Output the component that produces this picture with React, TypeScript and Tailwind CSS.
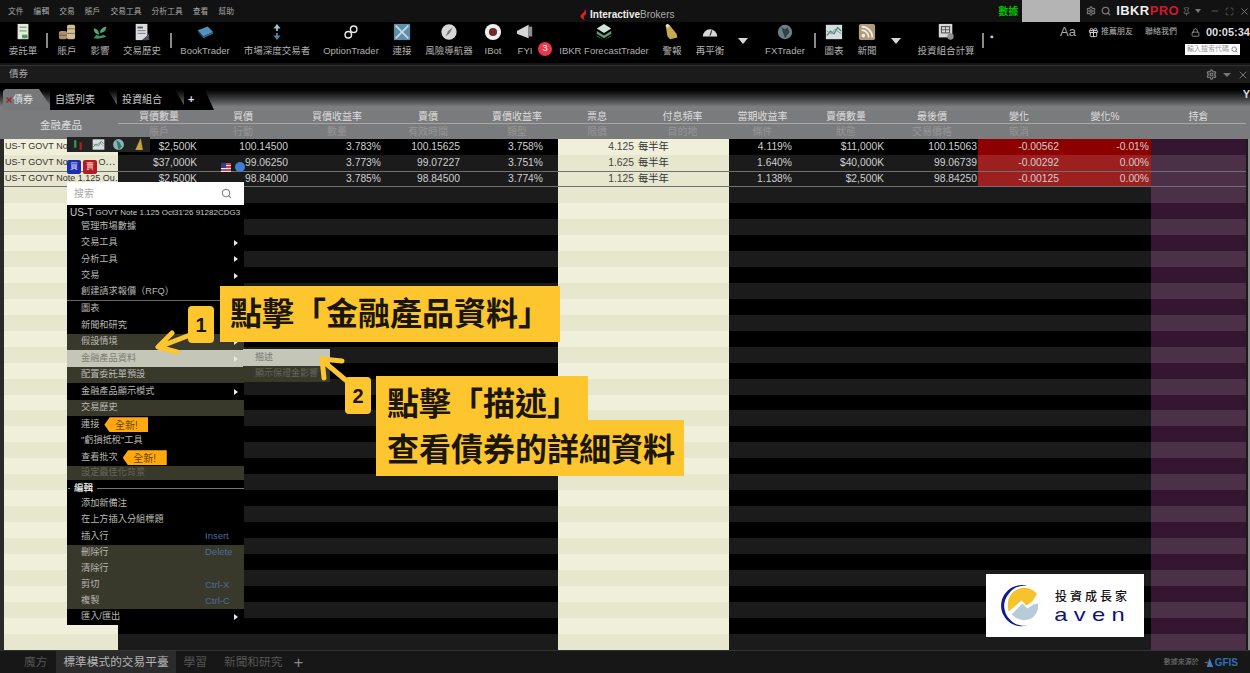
import { Gift, Lock, Maximize, Minus, Pin, Search, Settings, X } from "lucide-react";
import type { ReactNode } from "react";

const gridCols =
  "grid grid-cols-[114px_82px_92px_93px_79px_94px_78px_93px_67px_92px_90px_88px_85px_95px]";

const headerWidths = ["w-[82px]", "w-[92px]", "w-[93px]", "w-[79px]", "w-[94px]", "w-[78px]", "w-[93px]", "w-[67px]", "w-[92px]", "w-[90px]", "w-[88px]", "w-[85px]", "w-[95px]"];

const menus = ["文件", "編輯", "交易", "賬戶", "交易工具", "分析工具", "查看", "幫助"];

const icons: Record<string, ReactNode> = {
  order: (
    <>
      <rect x="4" y="1" width="12" height="17" fill="#e4e9dc" />
      <rect x="6" y="4" width="8" height="1.5" fill="#8aa88a" />
      <rect x="6" y="8" width="8" height="1.5" fill="#8aa88a" />
      <rect x="9" y="13" width="6" height="4" fill="#4f9a5a" />
    </>
  ),
  coins: (
    <>
      <rect x="1" y="9" width="9" height="9" rx="2" fill="#a8906a" />
      <rect x="10" y="2" width="9" height="16" rx="2" fill="#d3bd94" />
      <rect x="10" y="6" width="9" height="1" fill="#7d6a4a" />
      <rect x="10" y="11" width="9" height="1" fill="#7d6a4a" />
      <rect x="1" y="13" width="9" height="1" fill="#6d5a3c" />
    </>
  ),
  sprout: (
    <>
      <path d="M3 17c5 1 10 0 14-2l-3-2c-3 2-6 1-8 0z" fill="#3f8f5a" />
      <path d="M9 13C9 8 6 6 3 6c0 4 2 6 6 7zM10 11c0-4 3-6 7-7 0 4-2 7-7 7z" fill="#4fa56a" />
    </>
  ),
  history: (
    <>
      <rect x="3" y="1" width="13" height="18" fill="#d9dde0" />
      <rect x="5" y="4" width="6" height="2" fill="#555" />
      <rect x="5" y="8" width="9" height="1" fill="#777" />
      <rect x="5" y="11" width="9" height="1" fill="#777" />
      <path d="M10 19l8-7v7z" fill="#4b5258" />
    </>
  ),
  book: (
    <>
      <path d="M2 8l11-4 6 6-11 5z" fill="#4f93bd" />
      <path d="M2 8l6 7v2L2 10z" fill="#20475f" />
      <path d="M8 15l11-5v2L8 17z" fill="#2e6a8e" />
    </>
  ),
  depth: (
    <>
      <path d="M10 1l4 5h-3v3H9V6H6z" fill="#9fc0d8" />
      <path d="M10 19l-4-5h3v-3h2v3h3z" fill="#4f82a8" />
    </>
  ),
  chain: (
    <>
      <circle cx="7" cy="13" r="3.6" fill="none" stroke="#e8e8e8" strokeWidth="1.6" />
      <circle cx="13" cy="7" r="3.6" fill="none" stroke="#e8e8e8" strokeWidth="1.6" />
    </>
  ),
  link: (
    <>
      <rect x="1" y="1" width="18" height="18" fill="#5f8fa8" />
      <path d="M3 3l14 14M17 3L3 17" stroke="#c5d8e2" strokeWidth="2" />
    </>
  ),
  compass: (
    <>
      <circle cx="10" cy="10" r="8.5" fill="#d8d8d8" />
      <path d="M14 5L11 11 6 15l3-6z" fill="#777" />
    </>
  ),
  ibot: (
    <>
      <circle cx="10" cy="10" r="9" fill="#eee" />
      <circle cx="10" cy="10" r="4.5" fill="#6a2a2a" />
    </>
  ),
  fyi: (
    <>
      <path d="M1 9l13-7v15L1 12z" fill="#d6d6d6" />
      <rect x="14" y="4" width="4" height="11" fill="#8e8e8e" />
    </>
  ),
  layers: (
    <>
      <path d="M10 1l8 5-8 5-8-5z" fill="#cfe3d6" />
      <path d="M2 9l8 5 8-5v3l-8 5-8-5z" fill="#5f9f7a" />
      <path d="M2 14l8 5 8-5v1l-8 4-8-4z" fill="#3f7f5a" />
    </>
  ),
  bell: (
    <>
      <path d="M3 3l4-1 8 10 1 4-8 2-3-3z" fill="#c8a850" />
      <circle cx="5" cy="3" r="2" fill="#e8e0c0" />
    </>
  ),
  gauge: (
    <>
      <path d="M2 15a8 8 0 0 1 16 0z" fill="#d8d8d8" />
      <path d="M10 14l2-6" stroke="#444" strokeWidth="1.4" />
    </>
  ),
  globe: (
    <>
      <circle cx="10" cy="10" r="8" fill="#6d7f86" />
      <path d="M6 5l4 2 3-2 2 5-5 7-2-6z" fill="#2f4048" />
    </>
  ),
  chart: (
    <>
      <rect x="1" y="2" width="18" height="16" fill="#d6dde0" />
      <path d="M2 14l4-5 4 3 4-7 4 4" fill="none" stroke="#4f8f6a" strokeWidth="1.5" />
      <path d="M2 9l5 3 4-5 7 5" fill="none" stroke="#7f8f9a" strokeWidth="1" />
    </>
  ),
  rss: (
    <>
      <rect x="1" y="1" width="18" height="18" rx="2" fill="#b09a78" />
      <circle cx="6" cy="14" r="2" fill="#eee" />
      <path d="M4 8a8 8 0 0 1 8 8M4 4a12 12 0 0 1 12 12" fill="none" stroke="#eee" strokeWidth="2" />
    </>
  ),
  calc: (
    <>
      <rect x="2" y="1" width="15" height="15" fill="#d6d6d6" />
      <rect x="5" y="4" width="9" height="7" fill="none" stroke="#555" strokeWidth="1.2" />
      <path d="M9.5 4v7M5 7.5h9" stroke="#555" />
      <circle cx="15" cy="15" r="3.5" fill="#8f8f8f" />
    </>
  ),
};

function ToolIcon({ name }: { name: string }) {
  return (
    <svg viewBox="0 0 20 20" className="h-[18px] w-[18px]">
      {icons[name]}
    </svg>
  );
}

function ToolItem({ icon, label, width }: { icon: string; label: string; width: string }) {
  return (
    <div className={`flex shrink-0 flex-col items-center ${width}`}>
      <div className="flex h-[20px] items-center">
        <ToolIcon name={icon} />
      </div>
      <span className="mt-[2px] whitespace-nowrap text-[9.5px] leading-[14px] text-[#b0b0b0]">{label}</span>
    </div>
  );
}

function ToolSep() {
  return <div className="mt-[11px] h-[15px] w-[2px] shrink-0 bg-[#8a8a8a]" />;
}

function ToolCaret({ width }: { width: string }) {
  return (
    <div className={`flex shrink-0 justify-center pt-[16px] ${width}`}>
      <div className="h-0 w-0 border-x-[5px] border-t-[6px] border-x-transparent border-t-[#d8d8d8]" />
    </div>
  );
}

const headers = [
  { top: "買價數量", sub: "賬戶", cls: "" },
  { top: "買價", sub: "行動", cls: "pr-[6px]" },
  { top: "買價收益率", sub: "數量", cls: "pr-[3px]" },
  { top: "賣價", sub: "有效時間", cls: "pl-[7px]" },
  { top: "賣價收益率", sub: "類型", cls: "pl-[12px]" },
  { top: "票息", sub: "限價", cls: "" },
  { top: "付息頻率", sub: "目的地", cls: "" },
  { top: "當期收益率", sub: "條件", cls: "" },
  { top: "賣價數量", sub: "狀態", cls: "pl-[8px]" },
  { top: "最後價", sub: "交易價格", cls: "pr-[2px]" },
  { top: "變化", sub: "取消", cls: "pr-[6px]" },
  { top: "變化%", sub: "", cls: "pr-[7px]" },
  { top: "持倉", sub: "", cls: "" },
];

const bonds = [
  {
    name: "US-T GOVT No",
    tail: "",
    v: ["$2,500K", "100.14500", "3.783%", "100.15625", "3.758%", "4.125", "每半年", "4.119%", "$11,000K", "100.15063", "-0.00562", "-0.01%"],
  },
  {
    name: "US-T GOVT No",
    tail: "O⋯",
    v: ["$37,000K", "99.06250", "3.773%", "99.07227", "3.751%", "1.625", "每半年", "1.640%", "$40,000K", "99.06739", "-0.00292", "0.00%"],
  },
  {
    name: "US-T GOVT Note 1.125 Ou…",
    tail: "",
    v: ["$2,500K", "98.84000", "3.785%", "98.84500", "3.774%", "1.125", "每半年", "1.138%", "$2,500K", "98.84250", "-0.00125", "0.00%"],
  },
];

function TableRow({ index }: { index: number }) {
  const bond = bonds[index];
  const dark = index % 2 === 0 && index !== 2;
  const v = bond ? bond.v : [];
  const cell = `flex items-center justify-end ${dark ? "bg-black" : "bg-[#1b1b1b]"}`;
  const cream = dark ? "bg-[#f0efd9]" : "bg-[#e7e6ce]";
  const red = index === 0 ? "bg-[#8c0000]" : index < 3 ? "bg-[#9c2020]" : dark ? "bg-black" : "bg-[#1b1b1b]";
  return (
    <div
      className={`${gridCols} h-4 text-[10.3px] leading-none text-[#cfcfcf] ${
        index === 2 ? "border-y border-[#707070]" : ""
      }`}
    >
      <div className={`flex items-center justify-between overflow-hidden whitespace-nowrap pl-[1px] pr-[3px] text-[9px] text-[#333] ${cream}`}>
        <span>{bond?.name}</span>
        {bond?.tail && <span>{bond.tail}</span>}
      </div>
      <div className={`${cell} pr-[3px]`}>{v[0]}</div>
      <div className={`${cell} pr-[4px]`}>{v[1]}</div>
      <div className={`${cell} pr-[4px]`}>{v[2]}</div>
      <div className={`${cell} pr-[4px]`}>{v[3]}</div>
      <div className={`${cell} pr-[15px]`}>{v[4]}</div>
      <div className={`flex items-center justify-end pr-[2px] text-[#444] ${cream}`}>{v[5]}</div>
      <div className={`flex items-center pl-[2px] text-[#333] ${cream}`}>{v[6]}</div>
      <div className={`${cell} pr-[4px]`}>{v[7]}</div>
      <div className={`${cell} pr-[4px]`}>{v[8]}</div>
      <div className={`${cell} pr-[1px]`}>{v[9]}</div>
      <div className={`flex items-center justify-end pr-[7px] ${red}`}>{v[10]}</div>
      <div className={`flex items-center justify-end pr-[2px] ${red}`}>{v[11]}</div>
      <div className={dark ? "bg-[#351630]" : "bg-[#4c3048]"} />
    </div>
  );
}

type MenuEntry = { label: string; h?: string; olive?: boolean; arrow?: boolean; key?: string; dim?: boolean; hot?: boolean; badge?: string };

const menuTop: MenuEntry[] = [
  { label: "管理市場數據" },
  { label: "交易工具", arrow: true },
  { label: "分析工具", arrow: true },
  { label: "交易", arrow: true },
  { label: "創建請求報價（RFQ）" },
];

const menuMid: MenuEntry[] = [
  { label: "圖表", h: "h-[16.5px]" },
  { label: "新聞和研究", h: "h-[16.5px]" },
  { label: "假設情境", h: "h-[16.5px]", olive: true, arrow: true },
  { label: "金融產品資料", h: "h-[16.5px]", hot: true, arrow: true },
  { label: "配置委託單預設", h: "h-[16.5px]", olive: true },
  { label: "金融產品顯示模式", h: "h-[16.5px]", arrow: true },
  { label: "交易歷史", h: "h-[16.5px]", olive: true },
  { label: "連接", h: "h-[16.5px]", badge: "ml-[5px]" },
  { label: "\"虧損抵稅\"工具", h: "h-[16.5px]" },
  { label: "查看批次", h: "h-[16.5px]", badge: "ml-[5px]" },
  { label: "設定最佳化背景", h: "h-[14px]", olive: true, dim: true },
];

const menuEdit: MenuEntry[] = [
  { label: "添加新備注" },
  { label: "在上方插入分組標題" },
  { label: "插入行", key: "Insert" },
  { label: "刪除行", key: "Delete", olive: true },
  { label: "清除行", olive: true },
  { label: "剪切", key: "Ctrl-X", olive: true },
  { label: "複製", key: "Ctrl-C", olive: true },
  { label: "匯入/匯出", arrow: true },
];

function MenuItem({ item }: { item: MenuEntry }) {
  const bg = item.hot ? "bg-[#c4c6b8]" : item.olive ? "bg-[#38382b]" : "bg-black";
  const color = item.hot ? "text-[#7d7d74]" : item.dim ? "text-[#666659]" : "text-[#b8b8b4]";
  return (
    <div className={`flex items-center pl-[14px] pr-[4px] text-[9.2px] ${item.h ?? "h-[16.2px]"} ${bg} ${color}`}>
      <span className="whitespace-nowrap">{item.label}</span>
      {item.badge && (
        <span
          className={`flex h-[15px] w-[44px] items-center justify-center pt-[2px] text-[10px] text-[#6b4300] bg-[#ffa90f] [clip-path:polygon(0_50%,12%_0,100%_0,100%_100%,12%_100%)] ${item.badge}`}
        >
          全新!
        </span>
      )}
      {item.key && <span className="ml-auto mr-[7px] w-[28px] whitespace-nowrap text-[9.5px] text-[#4f6a9f]">{item.key}</span>}
      {item.arrow && (
        <span className="ml-auto mr-[2px] h-0 w-0 border-y-[3px] border-l-[4px] border-y-transparent border-l-[#e8e8e8]" />
      )}
    </div>
  );
}

function ContextMenu() {
  return (
    <div className="absolute left-[67px] top-[182px] w-[177px] bg-black">
      <div className="flex h-[23px] items-center justify-between bg-white pl-[7px] pr-[12px] text-[10px] text-[#aaa]">
        <span>搜索</span>
        <Search size={11} strokeWidth={2.5} className="text-[#888]" />
      </div>
      <div className="flex h-[14px] items-center whitespace-nowrap pl-[3px] pt-[1px] text-[8px] text-[#c8c8c8]">
        <span className="text-[10px]">US-T</span>&nbsp;GOVT Note 1.125 Oct31'26 91282CDG3
      </div>
      {menuTop.map((m) => (
        <MenuItem key={m.label} item={m} />
      ))}
      <div className="h-px bg-[#666]" />
      {menuMid.map((m) => (
        <MenuItem key={m.label} item={m} />
      ))}
      <div className="flex h-[16px] items-center bg-black pt-[1px]">
        <span className="w-[2px] h-px bg-[#888] ml-[1px]" />
        <span className="px-[4px] text-[9.5px] font-bold text-[#ddd]">編輯</span>
        <span className="h-px flex-1 bg-[#777]" />
      </div>
      {menuEdit.map((m) => (
        <MenuItem key={m.label} item={m} />
      ))}
    </div>
  );
}

function Logo() {
  return (
    <div className="absolute left-[986px] top-[574px] flex h-[63px] w-[158px] items-center bg-white pl-[12px]">
      <svg viewBox="0 0 48 48" className="h-[47px] w-[47px] shrink-0">
        <path d="M30 4A21 21 0 1 0 38 40 18 18 0 0 1 12 38 19 19 0 0 1 11 12 20 20 0 0 1 30 4z" fill="#0c1c8c" />
        <path d="M40 12A17 17 0 0 0 10 24c0 3 1 6 1 6l13-11 5 5 6-4z" fill="#f6c22d" />
        <path d="M14 33l11-11 5 5 6-4 5-1c1 8-4 17-14 17-5 0-9-2-13-6z" fill="#b9cbd8" />
      </svg>
      <div className="ml-[10px] flex flex-col items-center pt-[3px]">
        <span className="text-[12px] font-medium leading-[15px] tracking-[3px] text-[#111]">投資成長家</span>
        <span className="mt-[1px] origin-center scale-x-125 text-[19px] font-medium leading-[18px] tracking-[5px] text-[#12127a]">
          aven
        </span>
      </div>
    </div>
  );
}

function Callouts() {
  const box = "absolute bg-[#fdc62f] font-bold text-[#1c1608] whitespace-nowrap text-[32px] leading-none flex items-center";
  const badge =
    "absolute flex h-[37px] w-[26px] items-center justify-center rounded-[4px] bg-[#fdc62f] text-[20px] font-bold text-[#1c1608]";
  return (
    <>
      <div className={`${box} left-[220px] top-[286px] h-[56px] w-[340px] pl-[10px]`}>點擊「金融產品資料」</div>
      <div className={`${badge} left-[188px] top-[306px]`}>1</div>
      <svg viewBox="0 0 40 30" className="absolute left-[153px] top-[328px] h-[30px] w-[40px]">
        <path d="M37 7L6 19M19 5L5 19l19 5" fill="none" stroke="#fdc62f" strokeWidth="5" strokeLinejoin="round" strokeLinecap="round" />
      </svg>
      <div className={`${box} left-[376px] top-[376px] h-[46px] w-[212px] pl-[11px] pt-[10px]`}>點擊「描述」</div>
      <div className={`${box} left-[376px] top-[420px] h-[56px] w-[308px] pl-[11px] pt-[4px]`}>查看債券的詳細資料</div>
      <div className={`${badge} left-[345px] top-[377px]`}>2</div>
      <svg viewBox="0 0 34 30" className="absolute left-[317px] top-[355px] h-[30px] w-[34px]">
        <path d="M31 27L6 6M25 6L5 4l2 19" fill="none" stroke="#fdc62f" strokeWidth="5" strokeLinejoin="round" strokeLinecap="round" />
      </svg>
    </>
  );
}

export default function App() {
  return (
    <div className="relative h-[673px] w-[1250px] overflow-hidden bg-[#141414] font-['Liberation_Sans','Noto_Sans_CJK_TC',sans-serif]">
      {/* title bar */}
      <div className="flex h-[22px] items-center bg-[#121212]">
        <div className="flex w-[560px] gap-[10px] pl-[8px] pt-[2px] text-[7.8px] text-[#a8a8a8]">
          {menus.map((m) => (
            <span key={m}>{m}</span>
          ))}
        </div>
        <div className="flex items-center pl-[20px] pt-[6px] text-[10px]">
          <svg viewBox="0 0 10 14" className="mr-[2px] h-[13px] w-[8px]">
            <path d="M6 0C7 3 3 5 1 8c-1 3 2 5 5 6C4 11 4 9 7 7 8 5 8 2 6 0z" fill="#e02030" />
          </svg>
          <span className="font-bold text-[#eee]">Interactive</span>
          <span className="text-[#aaa]">Brokers</span>
        </div>
        <div className="ml-auto flex h-full items-center">
          <span className="mr-[4px] text-[10px] font-bold text-[#00c000]">數據</span>
          <div className="h-full w-[58px] bg-[#b4b4b4]" />
          <Settings size={10} strokeWidth={3} className="ml-[6px] text-[#777]" />
          <Search size={10} strokeWidth={3} className="ml-[5px] text-[#777]" />
          <span className="ml-[5px] text-[13px] font-bold tracking-[0.4px] text-[#eee]">IBKR</span>
          <span className="text-[13px] font-bold tracking-[0.4px] text-[#d01830]">PRO</span>
          <Pin size={9} className="ml-[3px] text-[#777]" />
          <div className="ml-[4px] h-0 w-0 border-x-[3px] border-t-[4px] border-x-transparent border-t-[#777]" />
          <Minus size={10} className="ml-[9px] text-[#666]" />
          <Maximize size={9} className="ml-[5px] text-[#666]" />
          <X size={11} className="ml-[5px] text-[#777]" />
        </div>
      </div>

      {/* toolbar */}
      <div className="flex h-[41px] bg-black">
        <ToolItem icon="order" label="委託單" width="w-[46px]" />
        <ToolSep />
        <ToolItem icon="coins" label="賬戶" width="w-[38px]" />
        <ToolItem icon="sprout" label="影響" width="w-[28px]" />
        <ToolItem icon="history" label="交易歷史" width="w-[56px]" />
        <ToolSep />
        <ToolItem icon="book" label="BookTrader" width="w-[66px]" />
        <ToolItem icon="depth" label="市場深度交易者" width="w-[78px]" />
        <ToolItem icon="chain" label="OptionTrader" width="w-[70px]" />
        <ToolItem icon="link" label="連接" width="w-[32px]" />
        <ToolItem icon="compass" label="風險導航器" width="w-[62px]" />
        <ToolItem icon="ibot" label="IBot" width="w-[26px]" />
        <ToolItem icon="fyi" label="FYI" width="w-[38px]" />
        <div className="relative w-[4px] shrink-0">
          <div className="absolute left-[-6px] top-[20px] flex h-[14px] w-[14px] items-center justify-center rounded-full bg-[#e8384a] text-[9px] text-white">
            3
          </div>
        </div>
        <ToolItem icon="layers" label="IBKR ForecastTrader" width="w-[112px]" />
        <ToolItem icon="bell" label="警報" width="w-[24px]" />
        <ToolItem icon="gauge" label="再平衡" width="w-[52px]" />
        <ToolCaret width="w-[14px]" />
        <div className="w-[6px] shrink-0" />
        <ToolItem icon="globe" label="FXTrader" width="w-[58px]" />
        <ToolSep />
        <ToolItem icon="chart" label="圖表" width="w-[36px]" />
        <ToolItem icon="rss" label="新聞" width="w-[30px]" />
        <ToolCaret width="w-[28px]" />
        <ToolItem icon="calc" label="投資組合計算" width="w-[72px]" />
        <ToolSep />
        <span className="ml-[6px] mt-[10px] text-[10px] leading-none text-[#ccc]">▪</span>
        <div className="ml-auto flex flex-col items-end">
          <div className="flex h-[20px] items-center whitespace-nowrap text-[#b4b4b4]">
            <span className="mr-[12px] text-[13px] text-[#aaa]">Aa</span>
            <Gift size={11} className="mr-[2px] text-[#ddd]" />
            <span className="mr-[12px] text-[8px]">推薦朋友</span>
            <span className="mr-[14px] text-[8px]">聯絡我們</span>
            <Lock size={9} className="mr-[6px] text-[#aaa]" />
            <span className="text-[11px] font-bold text-[#ddd]">00:05:34</span>
          </div>
          <div className="mr-[10px] mt-[2px] flex h-[11px] w-[55px] items-center justify-between bg-white px-[2px] text-[7px] text-[#999]">
            <span>輸入搜索代碼</span>
            <Search size={7} strokeWidth={3} className="text-[#778]" />
          </div>
        </div>
      </div>

      {/* panel title */}
      <div className="mt-[2px] flex h-[18px] items-center border-t border-[#333] bg-[#1b1b1b] pl-[9px] text-[9.5px] text-[#aaa]">
        <span>債券</span>
        <div className="ml-auto flex items-center pr-[1px] text-[#777]">
          <Settings size={11} strokeWidth={3} />
          <div className="ml-[6px] h-0 w-0 border-x-[4px] border-t-[4px] border-x-transparent border-t-[#777]" />
          <X size={12} className="ml-[6px]" />
        </div>
      </div>

      {/* tabs */}
      <div className="flex h-[27px] items-end bg-gradient-to-b from-black from-[12%] to-[#7d7e80] to-[88%] pl-[3px]">
        <div className="flex h-[21px] w-[50px] items-center bg-[#77787a] pl-[2px] text-[10px] text-white [clip-path:polygon(0_10%,5%_0,72%_0,100%_100%,0_100%)]">
          <X size={8} strokeWidth={4} className="text-[#a02020]" />
          <span className="text-[#e4e4e4]">債券</span>
        </div>
        <div className="-ml-[3px] flex h-[21px] w-[70px] items-center bg-black pl-[5px] text-[10px] text-[#ccc] [clip-path:polygon(0_0,82%_0,100%_100%,0_100%)]">
          自選列表
        </div>
        <div className="-ml-[3px] flex h-[21px] w-[70px] items-center bg-black pl-[5px] text-[10px] text-[#ccc] [clip-path:polygon(0_0,82%_0,100%_100%,0_100%)]">
          投資組合
        </div>
        <div className="-ml-[3px] flex h-[21px] w-[30px] items-center bg-black pl-[4px] text-[11px] font-bold text-[#ddd] [clip-path:polygon(0_0,68%_0,100%_100%,0_100%)]">
          +
        </div>
        <span className="ml-auto mb-[10px] text-[11px] font-bold leading-none text-[#ddd]">Y</span>
      </div>

      {/* table header */}
      <div className="flex h-[29px] bg-[#7a7b7d] px-[4px]">
        <div className="flex w-[114px] shrink-0 items-center justify-center pt-[2px] text-[10.5px] text-[#ddd]">金融產品</div>
        <div className="flex flex-1 flex-col">
          <div className="flex h-[14px] border-b border-[#a8a8a8]">
            {headers.map((h, i) => (
              <div key={h.top} className={`flex items-center justify-center text-[10px] text-[#dedede] ${h.cls} ${headerWidths[i]}`}>
                {h.top}
              </div>
            ))}
          </div>
          <div className="flex h-[15px]">
            {headers.map((h, i) => (
              <div key={h.top} className={`flex items-center justify-center text-[10px] text-[#969696] ${h.cls} ${headerWidths[i]}`}>
                {h.sub}
              </div>
            ))}
          </div>
        </div>
      </div>

      {/* table body */}
      <div className="flex h-[511px] overflow-hidden">
        <div className="w-[4px] shrink-0 bg-[#2a2a2a]" />
        <div className="flex flex-col">
          {Array.from({ length: 32 }, (_, i) => (
            <TableRow key={i} index={i} />
          ))}
        </div>
        <div className="flex w-[4px] shrink-0 justify-end bg-[#1b1b1b]">
          <div className="w-[2px] bg-[#888]" />
        </div>
      </div>

      {/* bottom tabs */}
      <div className="flex h-[23px] items-center border-t border-[#333] bg-[#171717] text-[11.7px] text-[#555]">
        <span className="ml-[24px]">魔方</span>
        <span className="ml-[9px] flex h-full items-center bg-[#2b2b2b] px-[7px] text-[#b4b4b4]">標準模式的交易平臺</span>
        <span className="ml-[8px]">學習</span>
        <span className="ml-[17px]">新聞和研究</span>
        <span className="ml-[11px] text-[17px] leading-none text-[#888]">+</span>
        <div className="ml-auto flex items-center pr-[12px]">
          <span className="text-[7px] text-[#777]">數據來源於</span>
          <svg viewBox="0 0 12 12" className="ml-[5px] h-[11px] w-[11px]">
            <path d="M6 1l4 10H3z" fill="#3f7fc0" />
            <path d="M0 6l4-1v2z" fill="#d04050" />
          </svg>
          <span className="text-[10px] font-bold text-[#2f6fb5]">GFIS</span>
        </div>
      </div>

      {/* hover toolbar over row 1 */}
      <div className="absolute left-[67px] top-[137px] flex h-[15px] w-[83px] items-center justify-around bg-[#222] px-[2px]">
        <svg viewBox="0 0 12 12" className="h-[13px] w-[13px]">
          <rect x="2" y="2" width="2" height="7" fill="#2f9f4f" />
          <rect x="7" y="4" width="2" height="7" fill="#b02020" />
        </svg>
        <svg viewBox="0 0 20 20" className="h-[13px] w-[13px]">
          {icons.chart}
        </svg>
        <svg viewBox="0 0 12 12" className="h-[13px] w-[13px]">
          <circle cx="6" cy="6" r="5" fill="#8fb0c0" />
          <path d="M4 2l3 2 2 4-3 3z" fill="#2f7f4f" />
        </svg>
        <svg viewBox="0 0 12 12" className="h-[13px] w-[13px]">
          <path d="M8 0l1 5 1 6H3z" fill="#c8a040" />
        </svg>
      </div>

      {/* quick buy and sell over row 2 */}
      <div className="absolute left-[67px] top-[160px] flex h-[14px] w-[14px] items-center justify-center rounded-[2px] bg-[#1c2fa8] text-[8px] text-[#cfd6ff]">
        買
      </div>
      <div className="absolute left-[83px] top-[160px] flex h-[14px] w-[14px] items-center justify-center rounded-[2px] bg-[#b01c24] text-[8px] text-[#ffd6d6]">
        賣
      </div>
      <div className="absolute left-[221px] top-[163px] h-[9px] w-[10px] bg-[repeating-linear-gradient(180deg,#d04050_0,#d04050_1.5px,#f0f0f0_1.5px,#f0f0f0_3px)]">
        <div className="h-[5px] w-[5px] bg-[#2a3f90]" />
      </div>
      <div className="absolute left-[235px] top-[162px] h-[10px] w-[10px] rounded-full bg-[#3f7fd0]" />

      <ContextMenu />

      {/* submenu */}
      <div className="absolute left-[243px] top-[349px] w-[87px] text-[9px]">
        <div className="flex h-[17px] items-center bg-[#c4c6b8] pl-[12px] text-[#77776e]">描述</div>
        <div className="flex h-[16px] items-center whitespace-nowrap bg-[#38382b] pl-[12px] text-[#66665a]">顯示保證金影響</div>
      </div>

      <Callouts />
      <Logo />
    </div>
  );
}
